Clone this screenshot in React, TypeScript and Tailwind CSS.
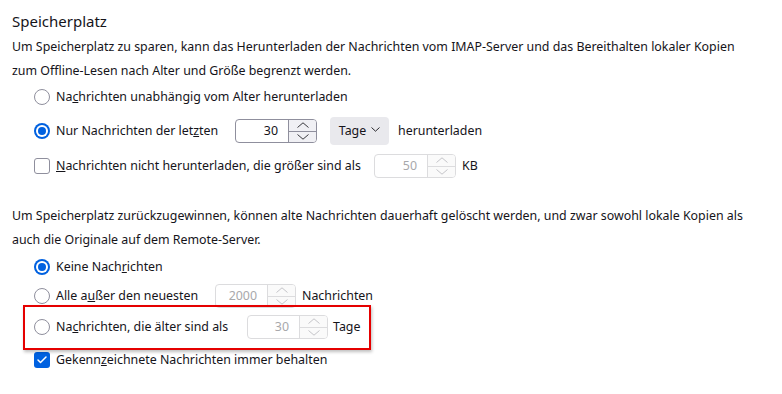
import { Check } from "lucide-react";

const font = { fontFamily: '"Segoe UI", "Noto Sans", sans-serif' };

function Chevron({ up, w = 13, h = 7, sw = 1 }: { up?: boolean; w?: number; h?: number; sw?: number }) {
  return (
    <svg width={w} height={h} viewBox={`0 0 ${w} ${h}`} fill="none" stroke="currentColor" strokeWidth={sw}>
      {up ? (
        <polyline points={`0.5,${h - 0.5} ${w / 2},0.8 ${w - 0.5},${h - 0.5}`} />
      ) : (
        <polyline points={`0.5,0.5 ${w / 2},${h - 0.8} ${w - 0.5},0.5`} />
      )}
    </svg>
  );
}

function Radio({ checked }: { checked?: boolean }) {
  if (checked) {
    return (
      <span className="w-4 h-4 rounded-full bg-[#0061e0] flex items-center justify-center shrink-0">
        <span className="w-[12px] h-[12px] rounded-full bg-white flex items-center justify-center">
          <span className="w-[8px] h-[8px] rounded-full bg-[#0061e0]" />
        </span>
      </span>
    );
  }
  return <span className="w-4 h-4 rounded-full border border-[#8f8f9d] bg-white shrink-0" />;
}

function Checkbox({ checked }: { checked?: boolean }) {
  if (checked) {
    return (
      <span className="w-4 h-4 rounded-[3px] bg-[#0061e0] flex items-center justify-center shrink-0">
        <Check size={12} strokeWidth={3} className="text-white" />
      </span>
    );
  }
  return <span className="w-4 h-4 rounded-[3px] border border-[#8f8f9d] bg-white shrink-0" />;
}

function Spinner({ value, disabled, width }: { value: string; disabled?: boolean; width: string }) {
  return (
    <div
      className={
        "flex h-6 shrink-0 rounded-[4px] border overflow-hidden " +
        width +
        (disabled ? " border-[#dcdcde] bg-white" : " border-[#8f8f9d] bg-white")
      }
    >
      <div className={"flex-1 flex items-center justify-end pr-[10px] " + (disabled ? "text-[#a8a8ab]" : "text-[#15141a]")}>
        {value}
      </div>
      <div
        className={
          "w-[28px] flex flex-col border-l " +
          (disabled ? "border-[#dcdcde] bg-[#fafafa] text-[#c4c4c8]" : "border-[#8f8f9d] bg-[#f0f0f4] text-[#3a3a3f]")
        }
      >
        <div className="flex-1 flex items-center justify-center">
          <Chevron up w={12} h={6} />
        </div>
        <div className={"h-px " + (disabled ? "bg-[#dcdcde]" : "bg-[#8f8f9d]")} />
        <div className="flex-1 flex items-center justify-center">
          <Chevron w={12} h={6} />
        </div>
      </div>
    </div>
  );
}

export default function App() {
  return (
    <div
      className="w-[782px] h-[394px] bg-white text-[#15141a] text-[12.4px] pl-3 overflow-hidden whitespace-nowrap"
      style={font}
    >
      <h2 className="text-[15px] leading-6 mt-[9px]">Speicherplatz</h2>
      <p className="leading-6 mt-[2px]">
        Um Speicherplatz zu sparen, kann das Herunterladen der Nachrichten vom IMAP-Server und das Bereithalten lokaler Kopien
        <br />
        zum Offline-Lesen nach Alter und Größe begrenzt werden.
      </p>

      <div className="pl-[22px]">
        <div className="flex items-center gap-[6px] h-6 mt-[2px]">
          <Radio />
          <span>
            Na<u>c</u>hrichten unabhängig vom Alter herunterladen
          </span>
        </div>

        <div className="flex items-center h-7 mt-2">
          <Radio checked />
          <span className="ml-[6px] w-[179px]">
            Nur Nachrichten der let<u>z</u>ten
          </span>
          <Spinner value="30" width="w-[82px]" />
          <div className="ml-[13px] h-7 w-[59px] shrink-0 rounded-[4px] bg-[#e9e9ed] flex items-center justify-center gap-[5px]">
            <span>Tage</span>
            <span className="pb-[4px]">
              <Chevron w={9} h={5} sw={0.9} />
            </span>
          </div>
          <span className="ml-[9px]">herunterladen</span>
        </div>

        <div className="flex items-center h-6 mt-[9px]">
          <Checkbox />
          <span className="ml-[6px] w-[318px]">
            <u>N</u>achrichten nicht herunterladen, die größer sind als
          </span>
          <Spinner value="50" disabled width="w-[82px]" />
          <span className="ml-[6px]">KB</span>
        </div>
      </div>

      <p className="leading-6 mt-[26px]">
        Um Speicherplatz zurückzugewinnen, können alte Nachrichten dauerhaft gelöscht werden, und zwar sowohl lokale Kopien als
        <br />
        auch die Originale auf dem Remote-Server.
      </p>

      <div className="pl-[22px]">
        <div className="flex items-center gap-[6px] h-6 mt-[3px]">
          <Radio checked />
          <span>
            Keine Nach<u>r</u>ichten
          </span>
        </div>

        <div className="flex items-center h-6 mt-[5px]">
          <Radio />
          <span className="ml-[6px] w-[159px]">
            Alle a<u>u</u>ßer den neuesten
          </span>
          <Spinner value="2000" disabled width="w-[81px]" />
          <span className="ml-[6px]">Nachrichten</span>
        </div>

        <div className="relative flex items-center h-6 mt-[7px]">
          <div className="absolute -left-[11px] -top-[10px] w-[348px] h-[45px] border-2 border-[#e50000] shadow-[1px_2px_3px_rgba(0,0,0,0.25)] pointer-events-none" />
          <Radio />
          <span className="ml-[6px] w-[191px]">
            Na<u>c</u>hrichten, die älter sind als
          </span>
          <Spinner value="30" disabled width="w-[81px]" />
          <span className="ml-[5px]">Tage</span>
        </div>

        <div className="flex items-center gap-[6px] h-6 mt-[9px]">
          <Checkbox checked />
          <span>
            Gekenn<u>z</u>eichnete Nachrichten immer behalten
          </span>
        </div>
      </div>
    </div>
  );
}
